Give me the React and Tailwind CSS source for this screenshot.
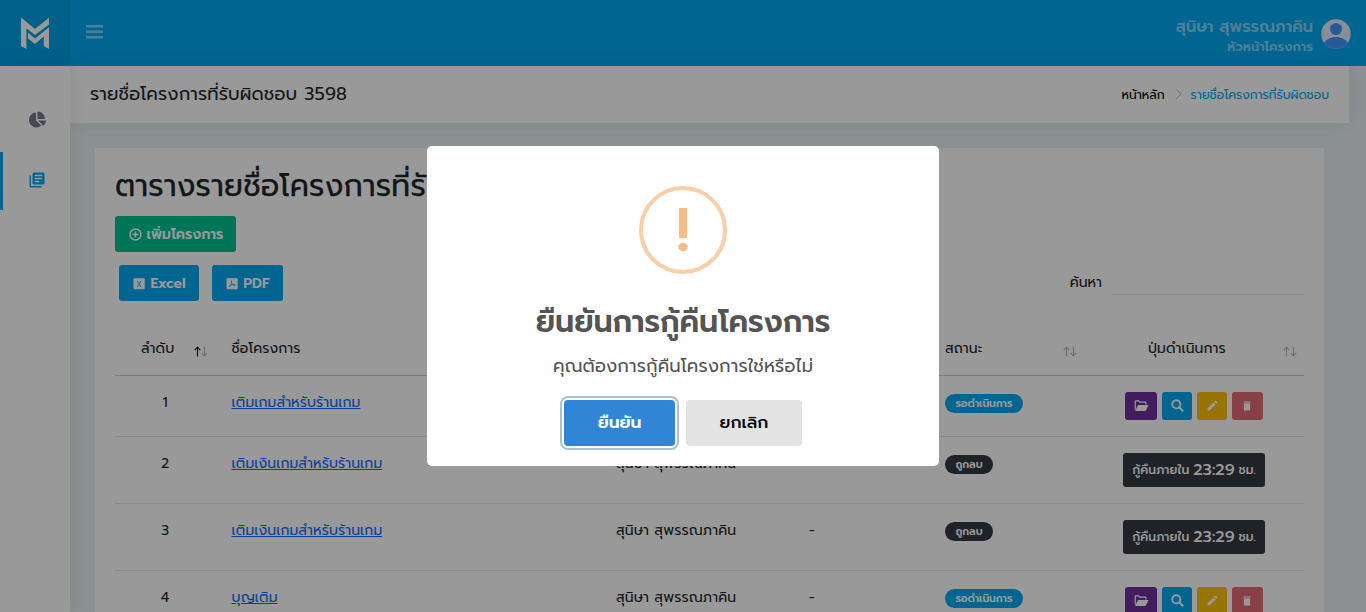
import { FaChartPie } from "react-icons/fa";
import { MdLibraryBooks, MdEdit } from "react-icons/md";

function Logo() {
  return (
    <svg width="30" height="32" viewBox="0 0 30 32" fill="#fff">
      <path d="M1 .5L15 12 29 .8V7.5L15 18 6.4 11.2V32L1 29Z" />
      <path d="M8 15.8L15 21.4 29 10.2V32L23.8 29V19.6L15 27 8 21.6Z" />
    </svg>
  );
}

function Avatar() {
  return (
    <svg width="30" height="30" viewBox="0 0 30 30">
      <clipPath id="face"><circle cx="15" cy="15" r="14.7" /></clipPath>
      <circle cx="15" cy="15" r="14.7" fill="#e6ecff" />
      <g fill="#4294ff" clipPath="url(#face)">
        <circle cx="15" cy="10" r="6" />
        <ellipse cx="15" cy="29" rx="13.5" ry="11" />
      </g>
    </svg>
  );
}

function SortIcon({ asc }) {
  return (
    <svg width="14" height="11" viewBox="0 0 14 11" fill="none" stroke="#212529" strokeWidth="1.2" className="mt-2 shrink-0">
      <path d="M3.5 10.5V1.5M.8 4.2L3.5 1.2 6.2 4.2" opacity={asc ? 1 : 0.3} />
      <path d="M10.5 .5v9M7.8 6.8l2.7 3 2.7-3" opacity=".3" />
    </svg>
  );
}

function FolderIcon() {
  return (
    <svg width="15" height="12" viewBox="0 0 15 12" fill="#fff">
      <path d="M1.2 9.5V1.4Q1.2.8 1.8.8H4.6L5.8 2.2H11.2Q11.9 2.2 11.9 3V4.4" fill="none" stroke="#fff" strokeWidth="1.2" />
      <path d="M4 5H14.6L12 10.2Q11.7 11 10.8 11H1Z" />
    </svg>
  );
}

function SearchIcon() {
  return (
    <svg width="13" height="13" viewBox="0 0 13 13" fill="none" stroke="#fff" strokeWidth="1.9">
      <circle cx="5.3" cy="5.3" r="4.1" />
      <path d="M8.3 8.3L12.2 12.2" strokeWidth="2.1" />
    </svg>
  );
}

function TrashIcon() {
  return (
    <svg width="8" height="10" viewBox="0 0 8 10" fill="#fff">
      <path d="M.4.4H7.6V1.6H.4ZM.9 2.2H7.1V9.4H.9Z" />
    </svg>
  );
}

function PlusIcon() {
  return (
    <svg width="13" height="13" viewBox="0 0 13 13" fill="none" stroke="#fff" strokeWidth="1.5">
      <circle cx="6.5" cy="6.5" r="5.5" />
      <path d="M6.5 3.4v6.2M3.4 6.5h6.2" />
    </svg>
  );
}

function ExcelIcon() {
  return (
    <svg width="12" height="12" viewBox="0 0 12 12">
      <rect x=".5" y=".3" width="11.2" height="11" rx="1" fill="#fff" />
      <path d="M4.3 3L8 9M8 3L4.3 9" stroke="#03a9f3" strokeWidth=".9" />
    </svg>
  );
}

function PdfIcon() {
  return (
    <svg width="12" height="12" viewBox="0 0 12 12">
      <rect x=".5" y=".3" width="11.2" height="11" rx="1" fill="#fff" />
      <path d="M5.3 2.4C6.2 4.8 4.8 7.3 2.8 9M5.4 5C6.2 6.6 7.6 7.4 9.6 7.2M3.6 7.8C5.2 6.9 7 6.6 9 6.8" fill="none" stroke="#03a9f3" strokeWidth=".8" />
    </svg>
  );
}

const rows = [
  { id: 1, name: "เติมเกมสำหรับร้านเกม", deleted: false },
  { id: 2, name: "เติมเงินเกมสำหรับร้านเกม", deleted: true },
  { id: 3, name: "เติมเงินเกมสำหรับร้านเกม", deleted: true },
  { id: 4, name: "บุญเติม", deleted: false },
];

function Row({ r }) {
  return (
    <div className={`grid grid-cols-[100px_386px_193px_136px_154px_220px] border-b border-[#e4e7ea] pt-4 leading-[21px] ${r.deleted ? "h-[67px]" : "h-[61px]"}`}>
      <div className="text-center">{r.id}</div>
      <div className="pl-[16.6px]"><a className="tracking-[0.09px] text-[#0d6efd] underline">{r.name}</a></div>
      <div className="pl-[15px] tracking-[0.12px]">สุนิษา สุพรรณภาคิน</div>
      <div className="pl-[15px]">-</div>
      <div className="pl-[15px]">
        <span className={`mt-[2px] inline-flex h-[19px] items-center rounded-full text-[10.5px] font-semibold text-white ${r.deleted ? "w-12 justify-center bg-[#343a40]" : "w-[78px] justify-center bg-[#03a9f3]"}`}>
          {r.deleted ? "ถูกลบ" : "รอดำเนินการ"}
        </span>
      </div>
      <div className="flex items-start justify-center">
        {r.deleted ? (
          <div className="flex h-[34px] w-[142px] items-center justify-center gap-1 rounded-[3px] bg-[#343a40] text-[12.25px] font-medium text-white">
            <span className="pt-px tracking-[0.08px]">กู้คืนภายใน</span><span className="text-base">23:29</span><span className="pt-px">ชม.</span>
          </div>
        ) : (
          <div className="flex gap-[5px] text-white">
            <div className="flex h-7 w-8 items-center justify-center rounded-[3px] bg-[#7030a0] pb-px"><FolderIcon /></div>
            <div className="flex h-7 w-[30px] items-center justify-center rounded-[3px] bg-[#03a9f3] pb-px"><SearchIcon /></div>
            <div className="flex h-7 w-[30px] items-center justify-center rounded-[3px] bg-[#fec107] pb-px"><MdEdit size={13} /></div>
            <div className="flex h-7 w-[31px] items-center justify-center rounded-[3px] bg-[#e46a76] pr-px pb-px"><TrashIcon /></div>
          </div>
        )}
      </div>
    </div>
  );
}

export default function App() {
  return (
    <div className="relative flex h-[612px] flex-col overflow-hidden bg-[#e9f1f5] font-['Prompt','Noto_Sans_Thai','Open_Sans',sans-serif] text-sm text-[#212529]">
      <header className="flex h-[66px] shrink-0 items-stretch bg-[#03a9f3]">
        <div className="flex w-[70px] items-center justify-center bg-black/5"><Logo /></div>
        <div className="flex flex-1 items-center justify-between pr-[15px] pl-[15.5px]">
          <svg width="17" height="14" viewBox="0 0 17 14" fill="#fff" fillOpacity=".5" className="-mt-0.5">
            <path d="M0 0H17V2.5H0ZM0 5.5H17V8H0ZM0 11H17V13.5H0Z" />
          </svg>
          <div className="flex items-center gap-2">
            <div className="pt-1.5 text-right font-semibold text-white/50">
              <div className="text-base leading-[22px] tracking-[0.05px]">สุนิษา สุพรรณภาคิน</div>
              <div className="text-[12.8px] leading-[18px] tracking-[0.07px]">หัวหน้าโครงการ</div>
            </div>
            <div className="pt-0.5"><Avatar /></div>
          </div>
        </div>
      </header>
      <div className="flex min-h-0 flex-1">
        <aside className="relative w-[70px] shrink-0 bg-white pt-6 shadow-[1px_0_20px_rgba(0,0,0,0.08)]">
          <div className="flex h-[58px] items-center justify-center pl-1 text-[#75798b]"><FaChartPie size={17} /></div>
          <div className="mt-1 flex h-[58px] items-center justify-center border-l-[3px] border-[#03a9f3] pb-0.5 pl-px text-[#03a9f3]"><MdLibraryBooks size={18} /></div>
        </aside>
        <main className="min-w-0 flex-1 pr-[17px]">
          <div className="flex h-[57px] items-center justify-between bg-white pr-5 pl-5 shadow-[1px_0_20px_rgba(0,0,0,0.08)]">
            <div className="text-[18px] tracking-[0.14px]">รายชื่อโครงการที่รับผิดชอบ 3598</div>
            <div className="flex items-center pt-0.5 text-[12.25px]">
              <span className="text-black">หน้าหลัก</span>
              <svg width="7" height="12" viewBox="0 0 7 12" fill="none" stroke="#a6b7bf" strokeOpacity=".8" className="mr-[9px] mb-1 ml-2.5"><path d="M.8 1L6 6 .8 11" /></svg>
              <span className="tracking-[-0.04px] text-[#03a9f3]">รายชื่อโครงการที่รับผิดชอบ</span>
            </div>
          </div>
          <section className="mx-[25px] mt-[25px] h-[520px] bg-white px-5 pt-5">
            <h1 className="text-[30px] leading-9 font-normal tracking-[0.25px] whitespace-nowrap [-webkit-text-stroke:0.25px_#212529]">ตารางรายชื่อโครงการที่รับผิดชอบ</h1>
            <button className="mt-3 flex h-9 w-[121px] items-center justify-center gap-[5px] rounded-[3px] bg-[#00c292] pt-px pl-px font-semibold text-white"><PlusIcon />เพิ่มโครงการ</button>
            <div className="mt-[13px] flex items-start justify-between pl-1">
              <div className="flex gap-[13px] font-semibold text-white">
                <button className="flex h-9 w-20 items-center justify-center gap-[5px] rounded-[3px] bg-[#03a9f3] pt-px pl-px"><ExcelIcon />Excel</button>
                <button className="flex h-9 w-[71px] items-center justify-center gap-[5px] rounded-[3px] bg-[#03a9f3] pt-px pl-px"><PdfIcon />PDF</button>
              </div>
              <div className="flex items-start gap-2.5">
                <span className="pt-[7px] leading-[21px]">ค้นหา</span>
                <div className="h-[30px] w-48 border-b border-[#e4e7ea]" />
              </div>
            </div>
            <div className="mt-[22px] grid h-[53px] grid-cols-[101px_385px_193px_136px_154px_220px] border-b border-[#c8ced3] pt-[15px] leading-[21px]">
              <div className="flex justify-between pr-2 pl-[26px]"><span className="tracking-[0.2px]">ลำดับ</span><SortIcon asc /></div>
              <div className="pl-[15.6px] tracking-[0.1px]">ชื่อโครงการ</div>
              <div />
              <div />
              <div className="flex justify-between pr-[7px] pl-[15px]"><span className="tracking-[0.1px]">สถานะ</span><SortIcon /></div>
              <div className="flex justify-between pr-[7px] pl-16"><span className="tracking-[0.1px]">ปุ่มดำเนินการ</span><SortIcon /></div>
            </div>
            {rows.map((r) => <Row key={r.id} r={r} />)}
          </section>
        </main>
      </div>

      <div className="absolute inset-0 flex items-center justify-center bg-black/40">
        <div className="flex h-80 w-[512px] flex-col items-center rounded-[5px] bg-white pt-10 text-[#545454]">
          <svg width="88" height="88" viewBox="0 0 88 88">
            <circle cx="44" cy="44" r="42" fill="none" stroke="#facea8" strokeWidth="4" />
            <path d="M40 22h8v30h-8z" fill="#f8bb86" />
            <ellipse cx="44" cy="61" rx="4.7" ry="4.2" fill="#f8bb86" />
          </svg>
          <h2 className="mt-[27px] text-[30px] leading-[42px] font-semibold tracking-[-0.05px]">ยืนยันการกู้คืนโครงการ</h2>
          <p className="mt-2.5 text-[18px] leading-[27px] tracking-[0.14px]">คุณต้องการกู้คืนโครงการใช่หรือไม่</p>
          <div className="mt-5 flex gap-[11px] text-base font-medium">
            <button className="h-[46px] w-[111px] rounded-[4px] bg-[#3085d6] text-[17px] font-semibold text-white shadow-[0_0_0_2px_#fff,0_0_0_4px_rgba(50,100,150,0.4)]">ยืนยัน</button>
            <button className="h-[46px] w-[116px] rounded-[4px] bg-[#e3e3e3] text-[17px] text-black">ยกเลิก</button>
          </div>
        </div>
      </div>
    </div>
  );
}
